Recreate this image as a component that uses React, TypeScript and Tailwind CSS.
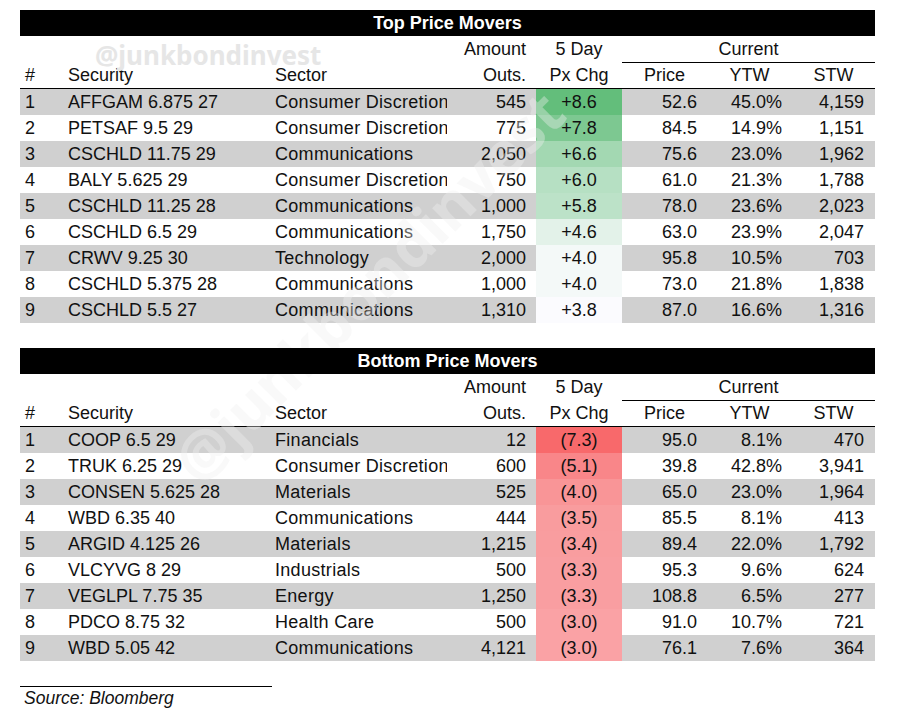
import React from 'react';

interface Row {
  rank: number;
  security: string;
  sector: string;
  amount: string;
  chg: string;
  chgBg: string;
  price: string;
  ytw: string;
  stw: string;
}

const topMovers: Row[] = [
  { rank: 1, security: 'AFFGAM 6.875 27', sector: 'Consumer Discretionary', amount: '545', chg: '+8.6', chgBg: 'bg-[#63be7b]', price: '52.6', ytw: '45.0%', stw: '4,159' },
  { rank: 2, security: 'PETSAF 9.5 29', sector: 'Consumer Discretionary', amount: '775', chg: '+7.8', chgBg: 'bg-[#7dc891]', price: '84.5', ytw: '14.9%', stw: '1,151' },
  { rank: 3, security: 'CSCHLD 11.75 29', sector: 'Communications', amount: '2,050', chg: '+6.6', chgBg: 'bg-[#a3d8b2]', price: '75.6', ytw: '23.0%', stw: '1,962' },
  { rank: 4, security: 'BALY 5.625 29', sector: 'Consumer Discretionary', amount: '750', chg: '+6.0', chgBg: 'bg-[#b6e0c3]', price: '61.0', ytw: '21.3%', stw: '1,788' },
  { rank: 5, security: 'CSCHLD 11.25 28', sector: 'Communications', amount: '1,000', chg: '+5.8', chgBg: 'bg-[#bce2c8]', price: '78.0', ytw: '23.6%', stw: '2,023' },
  { rank: 6, security: 'CSCHLD 6.5 29', sector: 'Communications', amount: '1,750', chg: '+4.6', chgBg: 'bg-[#e3f2e9]', price: '63.0', ytw: '23.9%', stw: '2,047' },
  { rank: 7, security: 'CRWV 9.25 30', sector: 'Technology', amount: '2,000', chg: '+4.0', chgBg: 'bg-[#f4f9f8]', price: '95.8', ytw: '10.5%', stw: '703' },
  { rank: 8, security: 'CSCHLD 5.375 28', sector: 'Communications', amount: '1,000', chg: '+4.0', chgBg: 'bg-[#f4f9f8]', price: '73.0', ytw: '21.8%', stw: '1,838' },
  { rank: 9, security: 'CSCHLD 5.5 27', sector: 'Communications', amount: '1,310', chg: '+3.8', chgBg: 'bg-[#fbfbfe]', price: '87.0', ytw: '16.6%', stw: '1,316' },
];

const bottomMovers: Row[] = [
  { rank: 1, security: 'COOP 6.5 29', sector: 'Financials', amount: '12', chg: '(7.3)', chgBg: 'bg-[#f8696b]', price: '95.0', ytw: '8.1%', stw: '470' },
  { rank: 2, security: 'TRUK 6.25 29', sector: 'Consumer Discretionary', amount: '600', chg: '(5.1)', chgBg: 'bg-[#f98689]', price: '39.8', ytw: '42.8%', stw: '3,941' },
  { rank: 3, security: 'CONSEN 5.625 28', sector: 'Materials', amount: '525', chg: '(4.0)', chgBg: 'bg-[#f99597]', price: '65.0', ytw: '23.0%', stw: '1,964' },
  { rank: 4, security: 'WBD 6.35 40', sector: 'Communications', amount: '444', chg: '(3.5)', chgBg: 'bg-[#f99c9e]', price: '85.5', ytw: '8.1%', stw: '413' },
  { rank: 5, security: 'ARGID 4.125 26', sector: 'Materials', amount: '1,215', chg: '(3.4)', chgBg: 'bg-[#f99d9f]', price: '89.4', ytw: '22.0%', stw: '1,792' },
  { rank: 6, security: 'VLCYVG 8 29', sector: 'Industrials', amount: '500', chg: '(3.3)', chgBg: 'bg-[#f99ea1]', price: '95.3', ytw: '9.6%', stw: '624' },
  { rank: 7, security: 'VEGLPL 7.75 35', sector: 'Energy', amount: '1,250', chg: '(3.3)', chgBg: 'bg-[#f99ea1]', price: '108.8', ytw: '6.5%', stw: '277' },
  { rank: 8, security: 'PDCO 8.75 32', sector: 'Health Care', amount: '500', chg: '(3.0)', chgBg: 'bg-[#faa2a5]', price: '91.0', ytw: '10.7%', stw: '721' },
  { rank: 9, security: 'WBD 5.05 42', sector: 'Communications', amount: '4,121', chg: '(3.0)', chgBg: 'bg-[#faa2a5]', price: '76.1', ytw: '7.6%', stw: '364' },
];

const cols = 'grid grid-cols-[48px_202px_177px_89px_86px_85px_85px_83px]';

const MoversTable: React.FC<{ title: string; rows: Row[] }> = ({ title, rows }) => (
  <div className="w-[855px]">
    <div className="relative z-20 h-[26px] bg-black text-center text-[18px] font-bold leading-[26px] text-white">
      {title}
    </div>

    {/* two header rows */}
    <div className={`${cols} h-[26px] leading-[26px]`}>
      <div className="col-span-3" />
      <div className="pr-[10px] text-right">Amount</div>
      <div className="text-center">5 Day</div>
      <div className="col-span-3 border-b border-black text-center">Current</div>
    </div>
    <div className={`${cols} h-[27px] border-b border-black leading-[26px]`}>
      <div className="pl-[5px]">#</div>
      <div>Security</div>
      <div className="pl-[5px]">Sector</div>
      <div className="pr-[10px] text-right">Outs.</div>
      <div className="text-center">Px Chg</div>
      <div className="text-center">Price</div>
      <div className="text-center">YTW</div>
      <div className="text-center">STW</div>
    </div>

    {rows.map((r, i) => (
      <div
        key={r.rank}
        className={`${cols} h-[26px] leading-[26px] ${i % 2 === 0 ? 'bg-[#d0d0d0]' : 'bg-white'}`}
      >
        <div className="pl-[5px]">{r.rank}</div>
        <div className="whitespace-nowrap">{r.security}</div>
        <div className="overflow-hidden whitespace-nowrap pl-[5px] tracking-[0.3px]">{r.sector}</div>
        <div className="pr-[10px] text-right">{r.amount}</div>
        <div className={`text-center ${r.chgBg}`}>{r.chg}</div>
        <div className="pr-[10px] text-right">{r.price}</div>
        <div className="pr-[10px] text-right">{r.ytw}</div>
        <div className="pr-[11px] text-right">{r.stw}</div>
      </div>
    ))}
  </div>
);

export default function App() {
  return (
    <div className="relative h-[720px] w-[902px] overflow-hidden bg-white pl-[20px] pt-[10px] font-['Liberation_Sans',Arial,sans-serif] text-[18px] text-[#111]">
      <MoversTable title="Top Price Movers" rows={topMovers} />
      <div className="mt-[25px]">
        <MoversTable title="Bottom Price Movers" rows={bottomMovers} />
      </div>

      <div className="mt-[25px] w-[252px] border-t border-black" />
      <div className="pl-[4px] text-[17.5px] italic leading-[22px]">Source: Bloomberg</div>

      {/* watermarks */}
      <div className="pointer-events-none absolute left-[95px] top-[42px] z-10 font-['Noto_Sans',sans-serif] text-[26px] font-bold leading-none text-[#e6e6e6]">
        @junkbondinvest
      </div>
      <div className="pointer-events-none absolute left-[368px] top-[286px] z-10 -translate-x-1/2 -translate-y-1/2 -rotate-45 whitespace-nowrap font-['Noto_Sans',sans-serif] text-[60px] font-bold leading-none text-[rgba(240,240,240,0.38)]">
        @junkbondinvest
      </div>
    </div>
  );
}
